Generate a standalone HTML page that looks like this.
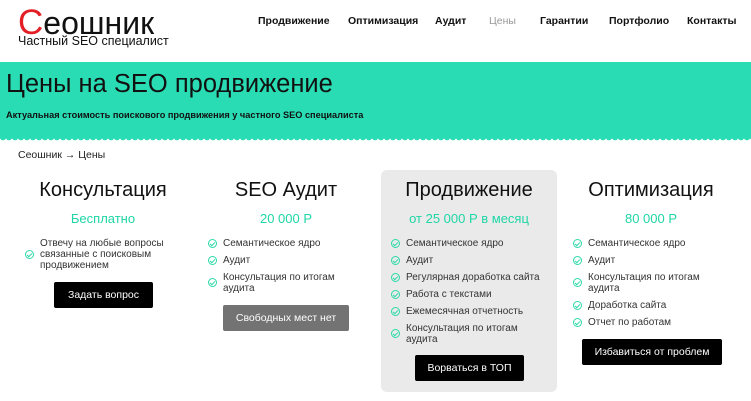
<!DOCTYPE html>
<html><head><meta charset="utf-8"><style>
*{margin:0;padding:0;box-sizing:border-box}
body{width:751px;height:401px;overflow:hidden;background:#fff;font-family:"Liberation Sans",sans-serif;color:#222;position:relative}
.a{position:absolute;white-space:nowrap}
.logo{left:18px;top:3px;font-size:32px;color:#111}
.logo b{color:#e31e24;font-weight:normal;font-size:35px}
.sub{left:18px;top:34px;font-size:12.5px;color:#111}
.nav{top:15px;font-size:10.5px;font-weight:bold;color:#111}
.band{left:0;top:62px;width:751px;height:76px;background:#2adcb4}
.wave{left:0;top:137px;width:751px;height:4px;background:radial-gradient(circle at 3px 0px,#2adcb4 3px,transparent 3.5px);background-size:6px 4px}
h1{position:absolute;left:6px;top:70px;font-size:25.5px;font-weight:normal;color:#111;white-space:nowrap}
.bs{left:6px;top:110px;font-size:9.2px;font-weight:bold;color:#111}
.bc{left:18px;top:149px;font-size:10.5px;color:#222}
.gray{left:381px;top:170px;width:176px;height:222px;background:#eaeaea;border-radius:6px}
.col{position:absolute;top:179px;width:180px}
.t{text-align:center;font-size:20px;color:#111;white-space:nowrap}
.p{text-align:center;font-size:13px;color:#1fd6a6;margin-top:9px;white-space:nowrap}
ul{list-style:none;margin-top:12px}
li{position:relative;padding-left:15px;font-size:10px;line-height:11px;margin-bottom:6px;color:#333}
li:before{content:"";position:absolute;left:0;top:50%;margin-top:-5px;width:7px;height:7px;border:1.5px solid #2dd9a8;border-radius:50%}
li:after{content:"";position:absolute;left:3px;top:50%;margin-top:-3px;width:2px;height:4px;border:solid #2dd9a8;border-width:0 1.5px 1.5px 0;transform:rotate(45deg)}
.btn{position:absolute;height:26px;line-height:26px;text-align:center;color:#fff;font-size:10.5px;background:#000;border-radius:2px}
</style></head><body>
<div class="a logo"><b>С</b>еошник</div>
<div class="a sub">Частный SEO специалист</div>
<div class="a nav" style="left:258px">Продвижение</div>
<div class="a nav" style="left:348px">Оптимизация</div>
<div class="a nav" style="left:435px">Аудит</div>
<div class="a nav" style="left:489px;color:#999;font-weight:normal">Цены</div>
<div class="a nav" style="left:540px">Гарантии</div>
<div class="a nav" style="left:609px">Портфолио</div>
<div class="a nav" style="left:687px">Контакты</div>
<div class="a band"></div><div class="a wave"></div>
<h1>Цены на SEO продвижение</h1>
<div class="a bs">Актуальная стоимость поискового продвижения у частного SEO специалиста</div>
<div class="a bc">Сеошник → Цены</div>
<div class="a gray"></div>

<div class="col" style="left:13px"><div class="t">Консультация</div><div class="p">Бесплатно</div>
<ul style="margin-left:12px"><li>Отвечу на любые вопросы<br>связанные с поисковым<br>продвижением</li></ul></div>
<div class="btn" style="left:54px;top:282px;width:99px">Задать вопрос</div>

<div class="col" style="left:196px"><div class="t">SEO Аудит</div><div class="p">20 000 Р</div>
<ul style="margin-left:12px"><li>Семантическое ядро</li><li>Аудит</li><li>Консультация по итогам<br>аудита</li></ul></div>
<div class="btn" style="left:223px;top:305px;width:126px;background:#737373">Свободных мест нет</div>

<div class="col" style="left:379px"><div class="t">Продвижение</div><div class="p">от 25 000 Р в месяц</div>
<ul style="margin-left:12px"><li>Семантическое ядро</li><li>Аудит</li><li>Регулярная доработка сайта</li><li>Работа с текстами</li><li>Ежемесячная отчетность</li><li>Консультация по итогам<br>аудита</li></ul></div>
<div class="btn" style="left:415px;top:355px;width:109px">Ворваться в ТОП</div>

<div class="col" style="left:561px"><div class="t">Оптимизация</div><div class="p">80 000 Р</div>
<ul style="margin-left:12px"><li>Семантическое ядро</li><li>Аудит</li><li>Консультация по итогам<br>аудита</li><li>Доработка сайта</li><li>Отчет по работам</li></ul></div>
<div class="btn" style="left:582px;top:339px;width:140px">Избавиться от проблем</div>
</body></html>
